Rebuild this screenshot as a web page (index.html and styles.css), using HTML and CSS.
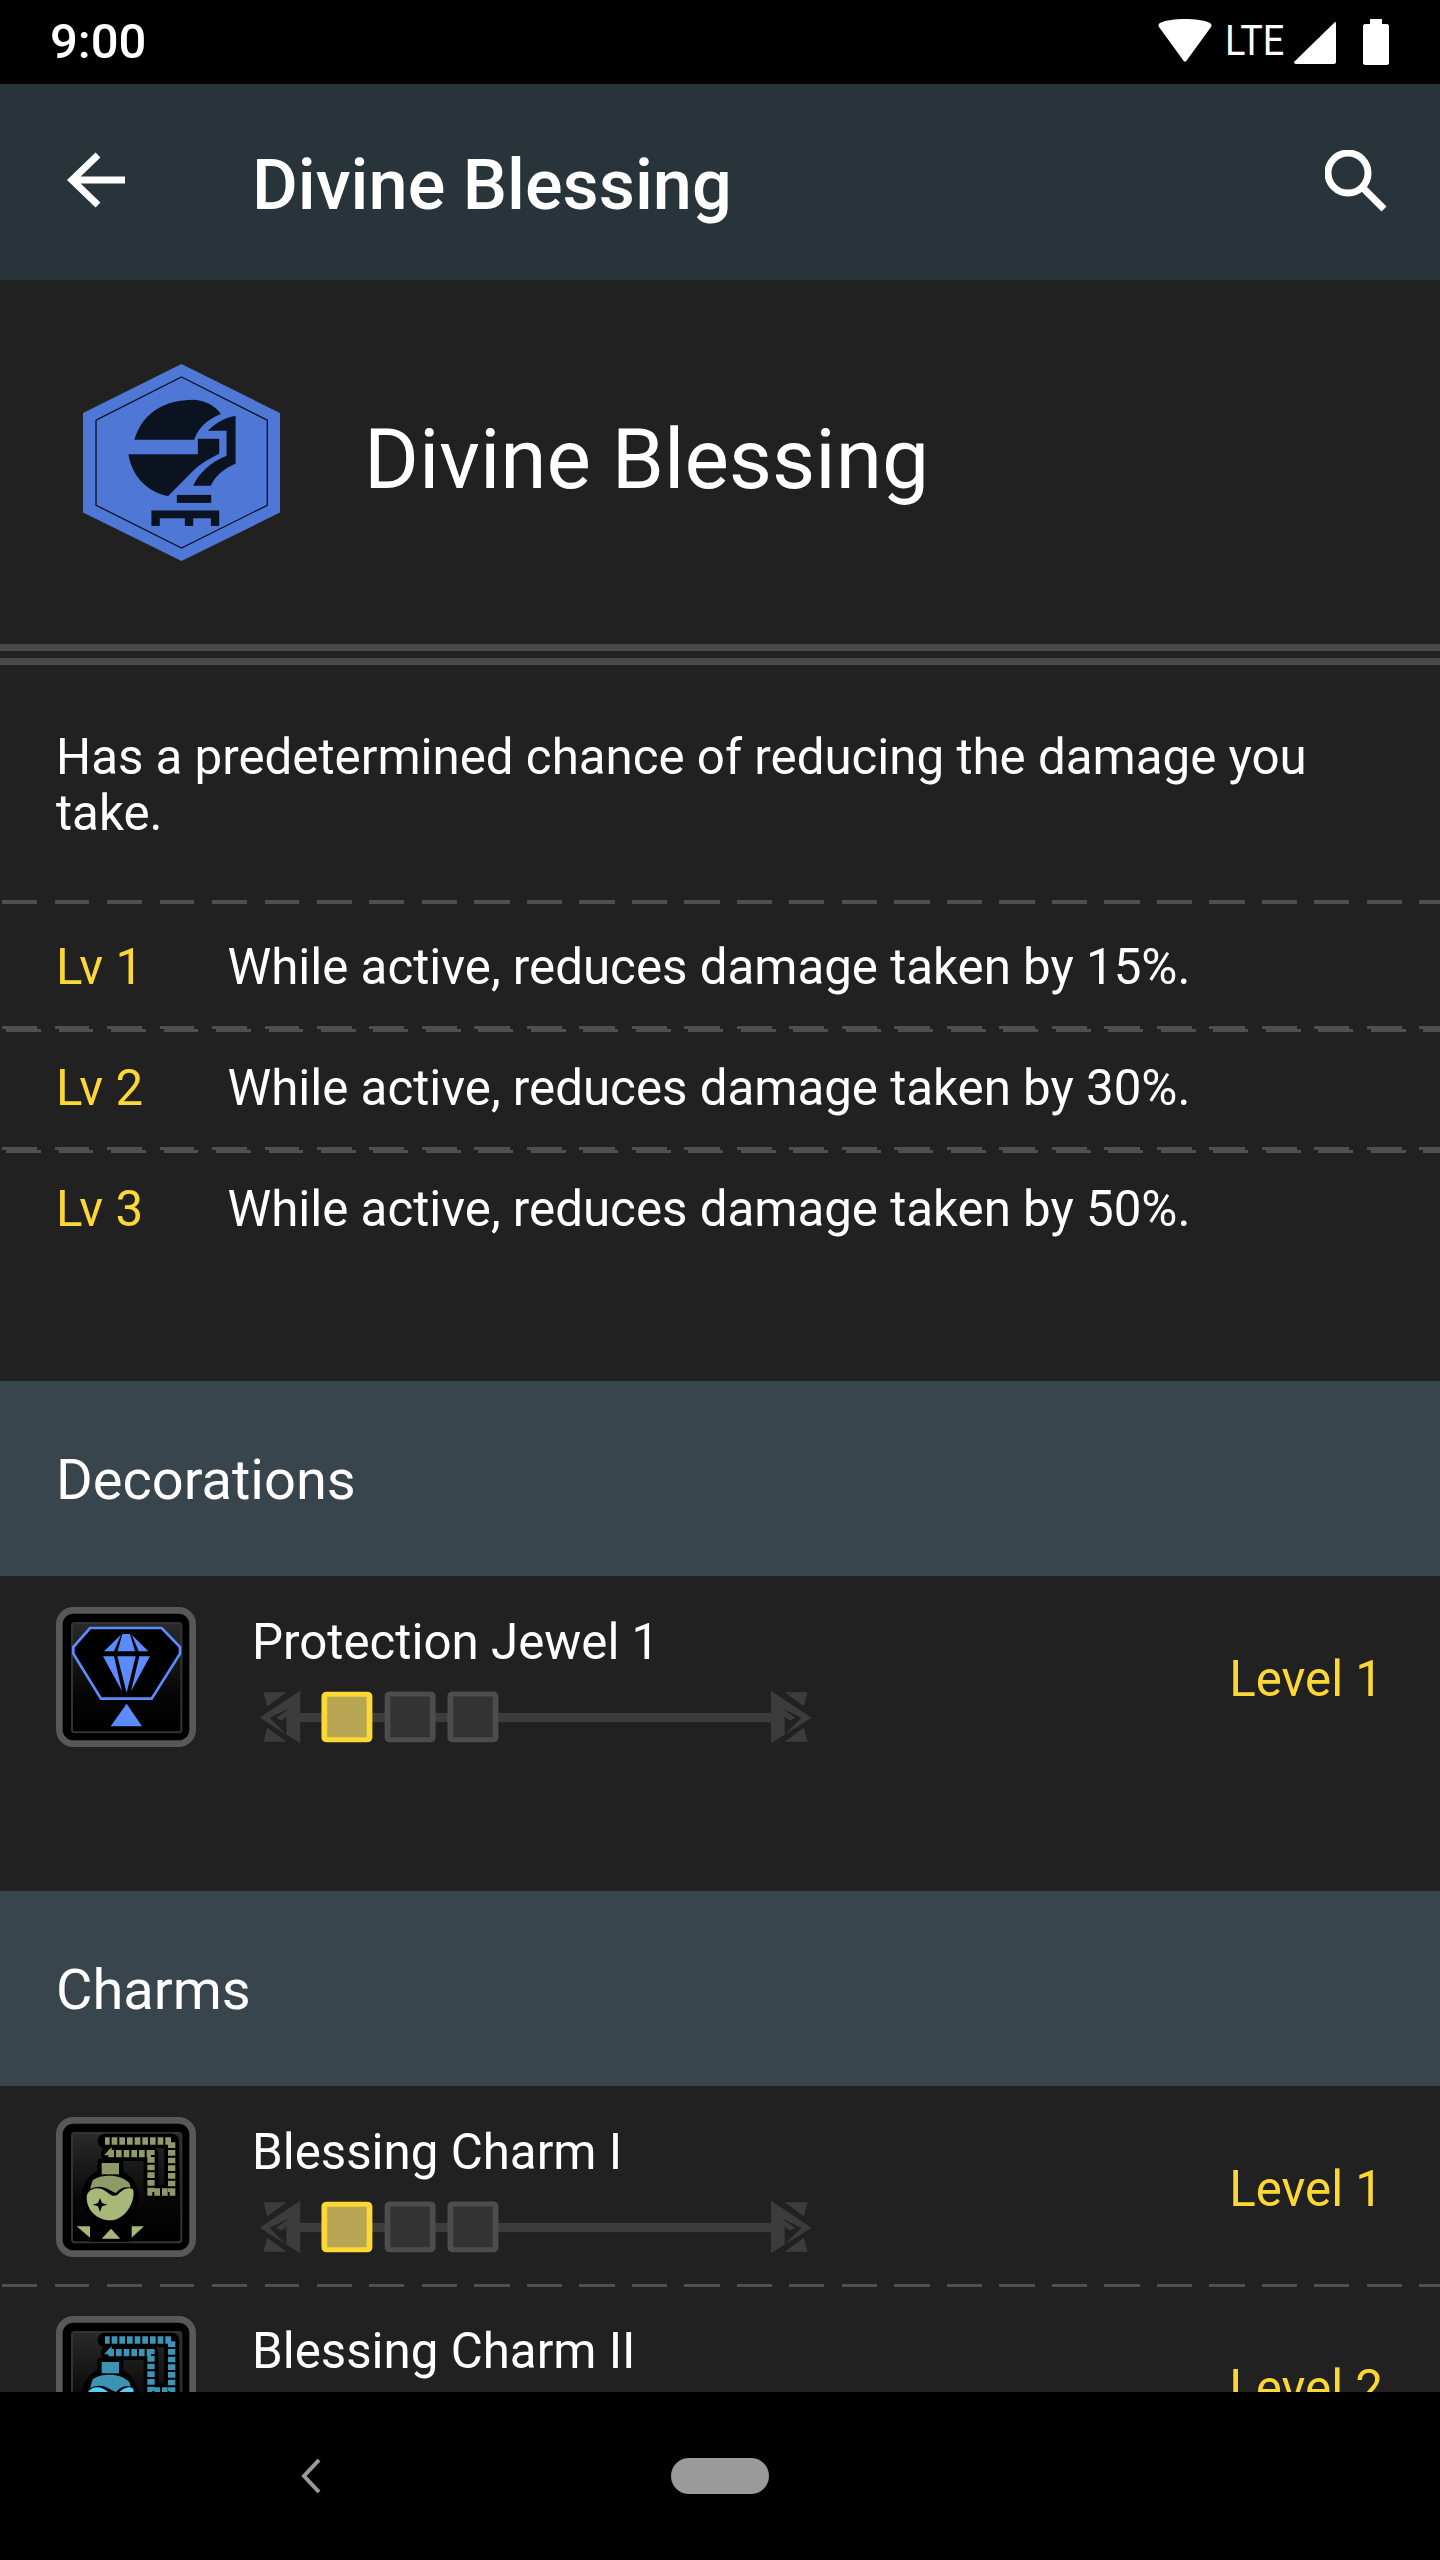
FILE: index.html
```html
<!DOCTYPE html>
<html lang="en">
<head>
<meta charset="utf-8">
<title>Divine Blessing</title>
<link rel="stylesheet" href="styles.css">
</head>
<body>
<svg class="defs" width="0" height="0" aria-hidden="true">
  <symbol id="frame" viewBox="48 50 420 420">
    <rect x="58" y="60" width="400" height="400" rx="42" class="frame-outer"/>
    <rect x="96" y="98" width="328" height="328" rx="8" fill="url(#tile)" class="frame-inner"/>
  </symbol>
  <linearGradient id="tile" x1="0" y1="0" x2="0" y2="1">
    <stop offset="0" stop-color="#2a2a2a"/>
    <stop offset=".65" stop-color="#060606"/>
    <stop offset="1" stop-color="#000"/>
  </linearGradient>
  <symbol id="charm" viewBox="48 50 420 420">
    <path d="M205 160H333V275H395V122H195" class="tube-back"/>
    <path d="M205 160H333V275H395V122H195" class="tube-dots"/>
    <path d="M192 165L215 140V165Z" class="charm-dark"/>
    <rect x="172" y="175" width="78" height="60" rx="10"/>
    <circle cx="210" cy="288" r="85"/>
    <rect x="185" y="188" width="52" height="34" class="charm-dark"/>
    <path d="M158 240C175 228 190 226 210 226C232 226 252 232 268 248L272 262C255 258 240 262 228 278C205 270 190 248 150 266Z" class="charm-dark"/>
    <path d="M140 288C145 265 170 258 190 268C205 276 215 292 232 284C245 270 262 256 280 268C286 310 252 360 210 360C170 360 138 328 140 288Z" class="charm-light"/>
    <path d="M180 293L186 308L202 313L186 318L180 335L174 318L158 313L174 308Z"/>
    <path d="M100 370H322L270 424H150Z"/>
    <path d="M110 378H150V412Z" class="charm-light"/>
    <path d="M213 385L241 415H185Z" class="charm-light"/>
    <path d="M312 378H275V412Z" class="charm-light"/>
  </symbol>
  <symbol id="slots" viewBox="40 85 1470 175" preserveAspectRatio="none">
    <rect x="150" y="160" width="1245" height="28" class="rail"/>
    <g class="rail">
      <path fill-rule="evenodd" d="M158 93V252L52 175ZM132 145L78 175L122 226V172L108 184L95 175Z"/>
      <path d="M62 98H122L72 140ZM62 247H122L72 205Z"/>
      <path d="M1387 93V252L1493 175ZM1413 145L1467 175L1423 226V172L1437 184L1450 175Z" fill-rule="evenodd"/>
      <path d="M1483 98H1423L1473 140ZM1483 247H1423L1473 205Z"/>
    </g>
    <rect x="221" y="104" width="118" height="137" rx="6" class="slot-on"/>
    <rect x="386" y="103" width="118" height="138" rx="6" class="slot-off"/>
    <rect x="550" y="103" width="118" height="138" rx="6" class="slot-off"/>
  </symbol>
</svg>

<div class="screen">
  <div class="status">
    <span class="clock">9:00</span>
    <div class="status-icons">
      <svg class="ic-wifi" viewBox="0 0 54 44"><path d="M27 42.500C26 42.500 25.500 42 25 41L1 8C0 6 .5 5 2 4C8 1 17 0 27 0S46 1 52 4C53.500 5 54 6 53 8L29 41C28.500 42 28 42.500 27 42.500Z"/></svg>
      <span class="lte">LTE</span>
      <svg class="ic-signal" viewBox="0 0 42 42"><path d="M41 0C41.500 0 42 .5 42 1V40C42 41 41 42 40 42H2C0 42-.5 40.500 .5 39.500Z"/></svg>
      <svg class="ic-battery" viewBox="0 0 26 46"><path d="M7 0H19V5H24C25 5 26 6 26 7V44C26 45 25 46 24 46H2C1 46 0 45 0 44V7C0 6 1 5 2 5H7Z"/></svg>
    </div>
  </div>

  <header class="toolbar">
    <svg class="ic-back" viewBox="0 0 58 58"><path d="M58 29H6M31 4L5 29L31 54"/></svg>
    <h1 class="toolbar-title">Divine Blessing</h1>
    <svg class="ic-search" viewBox="0 0 62 62"><circle cx="23" cy="23" r="20"/><path d="M37 37L59 59"/></svg>
  </header>

  <main class="content">
    <section class="skill-head">
      <svg class="skill-icon" viewBox="70 70 590 590">
        <path d="M365 70L660 217V515L365 660L70 515V217Z" class="hex"/>
        <path d="M365 109L622 238V493L365 621L109 493V238Z" class="hex-line"/>
        <g class="hex-ink">
          <path d="M224 297C250 210 320 178 400 177C440 178 470 200 483 220C445 235 415 260 403 297Z"/>
          <path d="M206 340H414V294H478V339C440 358 420 370 400 390L325 465C260 455 215 400 206 340Z"/>
          <path d="M444 270C470 245 500 228 527 226V368C490 385 465 405 453 435H400C415 400 450 365 500 345V270Z"/>
          <rect x="351" y="462" width="103" height="24"/>
          <path d="M275 509H478V555H453V532H400V555H375V532H300V555H275Z"/>
        </g>
      </svg>
      <h2 class="skill-name">Divine Blessing</h2>
    </section>
    <div class="double-rule"></div>
    <p class="skill-desc">Has a predetermined chance of reducing the damage you take.</p>

    <div class="level-list">
      <div class="dash thick"></div>
      <div class="level-row first"><span class="lv">Lv 1</span><span class="lv-text">While active, reduces damage taken by 15%.</span></div>
      <div class="dash double"></div>
      <div class="level-row"><span class="lv">Lv 2</span><span class="lv-text">While active, reduces damage taken by 30%.</span></div>
      <div class="dash double"></div>
      <div class="level-row"><span class="lv">Lv 3</span><span class="lv-text">While active, reduces damage taken by 50%.</span></div>
    </div>

    <h3 class="section-head">Decorations</h3>
    <div class="item first only">
      <div class="item-icon">
        <svg class="tile" viewBox="48 50 420 420">
          <use href="#frame" x="48" y="50" width="420" height="420"/>
          <path d="M150 113H365L420 170V190L335 325H183L100 190V170Z" class="gem-line"/>
          <g class="gem">
            <path d="M247 131H270L285 183H233Z"/>
            <path d="M243 133L192 183H222Z"/>
            <path d="M275 133L325 183H296Z"/>
            <path d="M189 198H222L246 303Z"/>
            <path d="M232 198H287L260 307Z"/>
            <path d="M298 198H330L273 303Z"/>
            <path d="M260 340L306 408H212Z"/>
          </g>
        </svg>
      </div>
      <div class="item-body">
        <div class="item-name">Protection Jewel 1</div>
        <svg class="slots"><use href="#slots" width="563" height="58"/></svg>
      </div>
      <div class="item-level">Level 1</div>
    </div>

    <h3 class="section-head">Charms</h3>
    <div class="item first">
      <div class="item-icon">
        <svg class="tile charm-green" viewBox="48 50 420 420">
          <use href="#frame" x="48" y="50" width="420" height="420"/>
          <use href="#charm" x="48" y="50" width="420" height="420"/>
        </svg>
      </div>
      <div class="item-body">
        <div class="item-name">Blessing Charm I</div>
        <svg class="slots"><use href="#slots" width="563" height="58"/></svg>
      </div>
      <div class="item-level">Level 1</div>
    </div>
    <div class="dash"></div>
    <div class="item second">
      <div class="item-icon">
        <svg class="tile charm-blue" viewBox="48 50 420 420">
          <use href="#frame" x="48" y="50" width="420" height="420"/>
          <use href="#charm" x="48" y="50" width="420" height="420"/>
        </svg>
      </div>
      <div class="item-body">
        <div class="item-name">Blessing Charm II</div>
        <svg class="slots"><use href="#slots" width="563" height="58"/></svg>
      </div>
      <div class="item-level">Level 2</div>
    </div>
  </main>

  <nav class="navbar">
    <svg class="ic-nav-back" viewBox="0 0 20 34"><path d="M18 1L3 17L18 33"/></svg>
    <div class="pill"></div>
  </nav>
</div>
</body>
</html>
```
FILE: styles.css
```css
* { box-sizing: border-box; }
html, body { margin: 0; padding: 0; background: #000; }
body { font-family: Roboto, "Liberation Sans", sans-serif; color: #fff; --dash: repeating-linear-gradient(90deg, transparent 0 2px, #4f4f4f 2px 37px, transparent 37px 52.5px); }
.defs { position: absolute; }

.screen { width: 1440px; height: 2560px; display: flex; flex-direction: column; overflow: hidden; }

.status { height: 84px; flex: none; background: #000; display: flex; align-items: center; justify-content: space-between; padding: 0 51px 0 50px; }
.clock { font-size: 49px; font-weight: 500; line-height: 84px; }
.status-icons { display: flex; align-items: flex-start; height: 84px; padding-top: 19px; }
.status-icons svg { fill: #fff; display: block; }
.ic-wifi { width: 54px; height: 44px; margin-right: 13px; }
.lte { font-size: 42px; font-weight: 400; line-height: 42px; margin: 1px 11px 0 0; transform: scaleX(.9); transform-origin: left; width: 58px; }
.ic-signal { width: 42px; height: 42px; margin: 3px 27px 0 0; }
.ic-battery { width: 26px; height: 46px; }

.toolbar { height: 196px; flex: none; background: #29343a; display: flex; align-items: center; padding: 0 53px 0 67px; }
.ic-back { width: 58px; height: 58px; fill: none; stroke: #fff; stroke-width: 7; margin-top: -4px; }
.toolbar-title { flex: 1; margin: 6px 0 0 127px; font-size: 70.25px; font-weight: 500; line-height: 84px; }
.ic-search { width: 62px; height: 62px; fill: none; stroke: #fff; stroke-width: 7; margin-top: -3px; }

.content { flex: 1; min-height: 0; overflow: hidden; background: #212121; }

.skill-head { height: 364px; display: flex; align-items: center; padding-left: 83px; }
.skill-icon { width: 197px; height: 197px; }
.hex { fill: #4e77d6; }
.hex-line { fill: none; stroke: #0c1320; stroke-width: 4; }
.hex-ink { fill: #0c1320; }
.skill-name { margin: -6px 0 0 84px; font-size: 83.8px; font-weight: 400; line-height: 100px; }

.double-rule { height: 21px; border-top: 7px solid #4a4a4a; border-bottom: 7px solid #4a4a4a; }

.skill-desc { margin: 0; padding: 64px 56px 0; font-size: 49.25px; line-height: 56px; height: 235px; }

.level-list { height: 481px; }
.dash { height: 3px; background: var(--dash); }
.dash.thick { height: 4px; }
.dash.double { height: 6px; background: var(--dash) 0 0 / 100% 3px no-repeat, var(--dash) 4px 3px / 100% 3px no-repeat; }
.level-row { height: 115px; padding: 0 56px 4px; display: flex; align-items: center; }
.level-row.first { height: 122px; padding: 4px 56px 0; }
.lv { width: 171.500px; flex: none; color: #fdd835; font-size: 49.25px; }
.lv-text { font-size: 49.25px; }

.section-head { margin: 0; height: 195px; background: #39454c; display: flex; align-items: center; padding: 3px 0 0 56px; font-size: 56px; font-weight: 400; }

.item { display: flex; align-items: flex-start; padding: 31px 57px 0 56px; }
.item.first { height: 198px; }
.item.only { height: 315px; }
.item.second { padding-top: 29px; height: 180px; }
.item-icon { width: 140px; height: 140px; flex: none; }
.tile { display: block; width: 140px; height: 140px; }
.frame-outer { fill: #000; stroke: #585858; stroke-width: 20; }
.frame-inner { stroke: #333; stroke-width: 6; }
.gem-line { fill: #000; stroke: #5b8cff; stroke-width: 8; }
.gem { fill: #5b8cff; }
.charm-green { --dark: #8e9b68; --light: #a8b878; }
.charm-blue { --dark: #3d93b3; --light: #55d0f5; }
.charm-dark { fill: var(--dark); }
.charm-light { fill: var(--light); }
.tube-back { fill: none; stroke: #000; stroke-width: 44; stroke-linejoin: round; stroke-linecap: round; }
.tube-dots { fill: none; stroke: var(--dark); stroke-width: 22; stroke-dasharray: 17 6; }

.item-body { flex: 1; margin-left: 56px; }
.item-name { font-size: 49.25px; line-height: 56px; margin-top: 7px; }
.slots { display: block; width: 563px; height: 58px; margin: 18px 0 0 3px; }
.rail { fill: #3c3c3c; }
.slot-on { fill: #b8a654; stroke: #fdd835; stroke-width: 15; }
.slot-off { fill: #333; stroke: #4d4d4d; stroke-width: 15; }

.item-level { color: #fdd835; font-size: 49.25px; line-height: 56px; margin-top: 44px; }

.navbar { height: 168px; flex: none; background: #000; display: flex; align-items: center; padding-left: 301px; }
.ic-nav-back { width: 20px; height: 34px; fill: none; stroke: #999; stroke-width: 4; }
.pill { width: 98px; height: 36px; border-radius: 18px; background: #9a9a9a; margin-left: 350px; }
```
